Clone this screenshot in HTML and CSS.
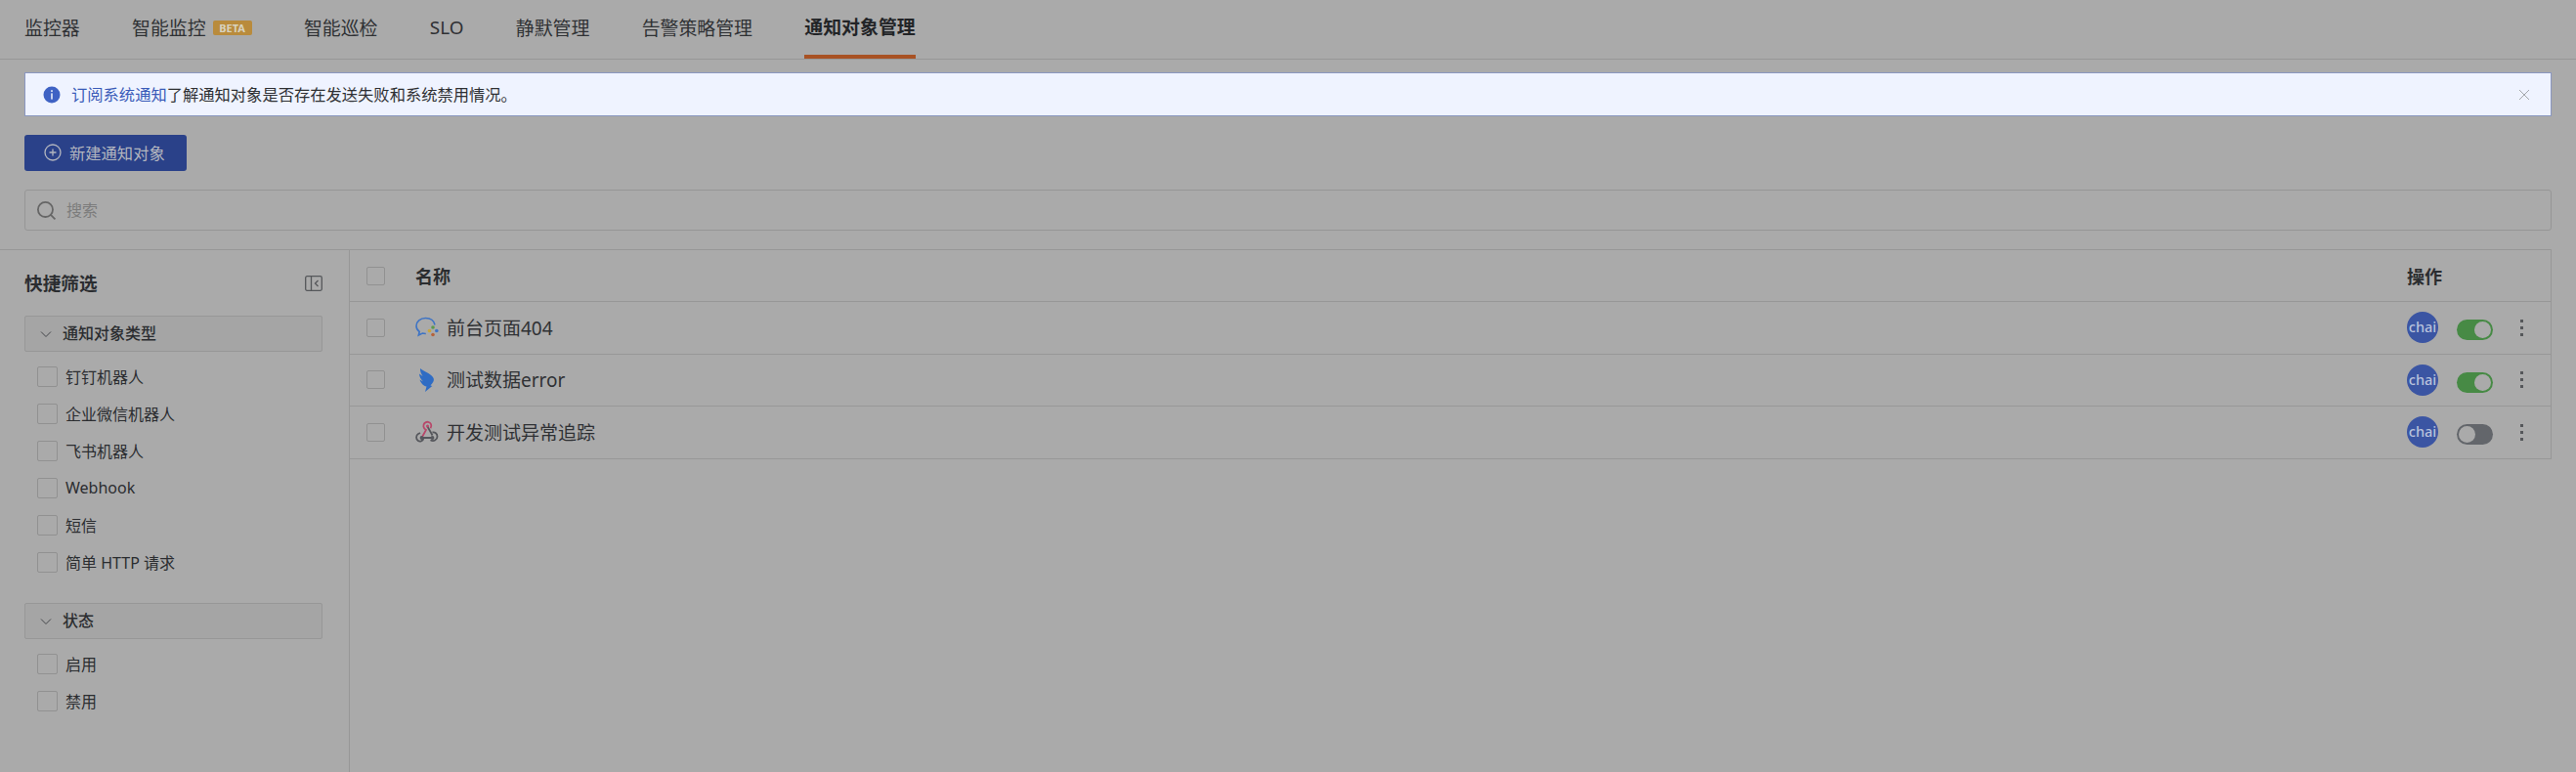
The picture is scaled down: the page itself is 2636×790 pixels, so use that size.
FILE: index.html
```html
<!DOCTYPE html>
<html lang="zh-CN">
<head>
    <meta charset="UTF-8">
    <title>通知对象管理</title>
    <link rel="stylesheet" href="styles.css">
</head>
<body>
    <nav class="tabs">
        <a class="tab">监控器</a>
        <a class="tab">智能监控<span class="beta">BETA</span></a>
        <a class="tab">智能巡检</a>
        <a class="tab">SLO</a>
        <a class="tab">静默管理</a>
        <a class="tab">告警策略管理</a>
        <a class="tab active">通知对象管理</a>
    </nav>

    <section class="top">
        <div class="banner">
            <svg class="info-icon" viewBox="0 0 18 18"><circle cx="9" cy="9" r="8.5" fill="#3f62c4"/><rect x="8.2" y="4.2" width="1.6" height="1.8" fill="#e6ebf8"/><rect x="8.2" y="7.4" width="1.6" height="6.2" fill="#e6ebf8"/></svg>
            <span class="banner-text"><a class="link">订阅系统通知</a>了解通知对象是否存在发送失败和系统禁用情况。</span>
            <svg class="close-icon" viewBox="0 0 12 12"><path d="M1 1l10 10M11 1L1 11" stroke="#a3a6ad" stroke-width="1" fill="none"/></svg>
        </div>
        <button class="btn-primary">
            <svg class="plus-icon" viewBox="0 0 18 18"><circle cx="9" cy="9" r="8" stroke="#b3b6bf" stroke-width="1.3" fill="none"/><path d="M9 5.5v7M5.5 9h7" stroke="#b3b6bf" stroke-width="1.3"/></svg>
            新建通知对象
        </button>
        <div class="search">
            <svg class="search-icon" viewBox="0 0 20 20"><circle cx="9" cy="9" r="7.2" stroke="#666" stroke-width="1.7" fill="none"/><path d="M14 14l4.5 4.5" stroke="#666" stroke-width="1.7"/></svg>
            <span>搜索</span>
        </div>
    </section>

    <div class="layout">
        <aside class="sidebar">
            <div class="sidebar-head">
                <h3>快捷筛选</h3>
                <svg class="collapse-icon" viewBox="0 0 18 16"><rect x="0.7" y="0.7" width="16.6" height="14.6" rx="1.5" stroke="#55575a" stroke-width="1.3" fill="none"/><path d="M6.5 1v14" stroke="#55575a" stroke-width="1.3"/><path d="M13.5 5l-3 3 3 3" stroke="#55575a" stroke-width="1.3" fill="none"/></svg>
            </div>

            <div class="group">
                <div class="group-head">
                    <svg class="chevron" viewBox="0 0 12 8"><path d="M1 1.5l5 5 5-5" stroke="#44464a" stroke-width="1" fill="none"/></svg>
                    <span class="group-title">通知对象类型</span>
                </div>
                <label class="option"><span class="check"></span>钉钉机器人</label>
                <label class="option"><span class="check"></span>企业微信机器人</label>
                <label class="option"><span class="check"></span>飞书机器人</label>
                <label class="option"><span class="check"></span>Webhook</label>
                <label class="option"><span class="check"></span>短信</label>
                <label class="option"><span class="check"></span>简单 HTTP 请求</label>
            </div>

            <div class="group">
                <div class="group-head">
                    <svg class="chevron" viewBox="0 0 12 8"><path d="M1 1.5l5 5 5-5" stroke="#44464a" stroke-width="1" fill="none"/></svg>
                    <span class="group-title">状态</span>
                </div>
                <label class="option"><span class="check"></span>启用</label>
                <label class="option"><span class="check"></span>禁用</label>
            </div>
        </aside>

        <main class="table">
            <div class="row head">
                <span class="check small"></span>
                <span class="name-col">名称</span>
                <span class="ops-col">操作</span>
            </div>

            <div class="row">
                <span class="check small"></span>
                <span class="name-col">
                    <svg class="type-icon" viewBox="0 0 24 24"><path d="M20 9.500C19 5 15.500 2.500 10.500 2.500 5 2.500 1 6 1 10.500c0 2.500 1.200 4.500 3.200 6l-.9 3.500 4-1.900c1 .3 2 .4 3.500.4" stroke="#3f74c4" stroke-width="1.600" fill="none"/><circle cx="21.800" cy="15.500" r="1.800" fill="#3f74c4"/><circle cx="18" cy="12" r="1.800" fill="#5d9a4c"/><circle cx="14.500" cy="15.500" r="1.800" fill="#c9a63a"/><circle cx="18" cy="19.500" r="1.800" fill="#b5633a"/></svg>
                    <span>前台页面404</span>
                </span>
                <span class="ops-col">
                    <span class="avatar">chai</span>
                    <span class="toggle on"></span>
                    <span class="more"><i></i><i></i><i></i></span>
                </span>
            </div>

            <div class="row">
                <span class="check small"></span>
                <span class="name-col">
                    <svg class="type-icon" viewBox="0 0 24 24"><path d="M5 0c3 2.500 10 5 13 9 1.500 2.200 1 4-.5 6l-2 2.500 1.800.5L10 24l1.500-5.500C8.500 18 5.500 15 4.500 11.500l3.500 2C5.500 11 4.200 8.500 4 5.500l3.500 2.500C6 5.500 4.800 3 5 0z" fill="#2f6cc4"/></svg>
                    <span>测试数据error</span>
                </span>
                <span class="ops-col">
                    <span class="avatar">chai</span>
                    <span class="toggle on"></span>
                    <span class="more"><i></i><i></i><i></i></span>
                </span>
            </div>

            <div class="row">
                <span class="check small"></span>
                <span class="name-col">
                    <svg class="type-icon" viewBox="0 0 24 24"><path d="M6.500 18L11 10C8 8.500 7.500 5 9.500 3c2-2 5.500-1.500 6.500 1 .6 1.500.4 3-.5 4.200" stroke="#b8486a" stroke-width="1.800" fill="none"/><path d="M12.500 6.500l5 9" stroke="#55575c" stroke-width="1.800" fill="none"/><path d="M17.500 12.500c2.500-.5 5 1 5 4.200 0 3.500-4 5.500-7 3.500" stroke="#55575c" stroke-width="1.800" fill="none"/><path d="M17.500 18h-9c-.5 3-3.500 4.500-5.700 3C.5 19.500.5 15.500 3 14l2-1" stroke="#55575c" stroke-width="1.800" fill="none"/><circle cx="6.500" cy="18" r="1.900" fill="#55575c"/><circle cx="17.500" cy="18" r="1.900" fill="#55575c"/><circle cx="12.500" cy="6" r="1.500" fill="#b8486a"/></svg>
                    <span>开发测试异常追踪</span>
                </span>
                <span class="ops-col">
                    <span class="avatar">chai</span>
                    <span class="toggle"></span>
                    <span class="more"><i></i><i></i><i></i></span>
                </span>
            </div>
        </main>
    </div>
</body>
</html>
```

FILE: styles.css
```css
* {
    margin: 0;
    padding: 0;
    box-sizing: border-box;
}

body {
    font-family: "Noto Sans", "Noto Sans CJK SC", sans-serif;
    background: #aaaaaa;
    color: #2b2d30;
    width: 2636px;
    height: 790px;
    overflow: hidden;
}

.tabs {
    display: flex;
    gap: 53.33px;
    height: 61px;
    padding-left: 25px;
    border-bottom: 1px solid #979797;
}

.tab {
    display: flex;
    align-items: center;
    height: 60px;
    padding-bottom: 4px;
    font-size: 18.9px;
    color: #2f3134;
}

.tab.active {
    font-weight: 700;
    color: #222427;
    border-bottom: 4px solid #a85224;
    padding-bottom: 0;
    height: 60px;
    align-items: flex-start;
    line-height: 56px;
}

.beta {
    margin-left: 7px;
    width: 40px;
    height: 15px;
    border-radius: 2px;
    background: #b98b3c;
    color: #d8d2bf;
    font-size: 11px;
    font-weight: 700;
    line-height: 15px;
    text-align: center;
}

.top {
    width: 2611px;
    padding: 13px 0 0 25px;
}

.banner {
    display: flex;
    align-items: center;
    height: 45px;
    padding: 0 21px 0 18px;
    background: #eff3ff;
    border: 1px solid #8a97c0;
    font-size: 16.3px;
    color: #2e3033;
}

.info-icon {
    width: 18px;
    height: 18px;
    margin-right: 11px;
}

.banner-text {
    flex: 1;
    margin-top: -2px;
}

.link {
    color: #3a5bb8;
}

.close-icon {
    width: 12px;
    height: 12px;
}

.btn-primary {
    display: flex;
    align-items: center;
    gap: 8px;
    width: 166px;
    height: 37px;
    margin-top: 19px;
    padding: 0 0 1px 20px;
    background: #2a4189;
    border: none;
    border-radius: 3px;
    color: #b3b6bf;
    font-family: inherit;
    font-size: 16.3px;
}

.plus-icon {
    width: 18px;
    height: 18px;
}

.search {
    display: flex;
    align-items: center;
    gap: 10px;
    height: 42px;
    margin-top: 19px;
    padding-left: 11px;
    border: 1px solid #969696;
    border-radius: 3px;
    font-size: 16px;
    color: #7c7c7c;
}

.search span {
    margin-top: -2px;
}

.search-icon {
    width: 21px;
    height: 21px;
}

.layout {
    display: flex;
    width: 2611px;
    height: 535px;
    margin-top: 19px;
    border-top: 1px solid #979797;
}

.sidebar {
    width: 358px;
    padding: 0 27px 0 25px;
    border-right: 1px solid #979797;
}

.sidebar-head {
    display: flex;
    justify-content: space-between;
    align-items: center;
    height: 67px;
}

.sidebar-head h3 {
    font-size: 18.67px;
    font-weight: 700;
    color: #2b2d30;
    margin-top: -3px;
}

.collapse-icon {
    width: 18px;
    height: 16px;
}

.group {
    margin-bottom: 23px;
}

.group-head {
    display: flex;
    align-items: center;
    height: 37px;
    padding-left: 15px;
    gap: 11px;
    background: #a5a5a5;
    border: 1px solid #979797;
    border-radius: 2px;
    font-size: 16px;
    font-weight: 500;
    margin-bottom: 6px;
}

.group-title {
    margin-top: -3px;
}

.chevron {
    width: 12px;
    height: 8px;
}

.option {
    display: flex;
    align-items: center;
    gap: 8px;
    height: 38px;
    padding: 0 0 0 13px;
    font-size: 16px;
    color: #2b2d30;
}

.check {
    display: block;
    width: 21px;
    height: 21px;
    flex-shrink: 0;
    border: 1px solid #919191;
    border-radius: 2px;
}

.check.small {
    width: 19px;
    height: 19px;
}

.table {
    flex: 1;
    align-self: flex-start;
    border-right: 1px solid #979797;
}

.row {
    display: flex;
    align-items: center;
    height: 53.5px;
    padding-left: 17px;
    border-bottom: 1px solid #979797;
    font-size: 19px;
    color: #2f3134;
}

.row.head {
    height: 53px;
    font-weight: 700;
    font-size: 18px;
    color: #2b2d30;
}

.name-col {
    display: flex;
    align-items: center;
    gap: 8px;
    flex: 1;
    margin-left: 31px;
}

.name-col span {
    margin-top: -1px;
}

.type-icon {
    width: 24px;
    height: 24px;
}

.ops-col {
    display: flex;
    align-items: center;
    width: 147px;
}

.avatar {
    width: 32px;
    height: 32px;
    border-radius: 50%;
    background: #3b55a3;
    color: #b9c2dc;
    font-size: 14.5px;
    font-weight: 500;
    line-height: 31px;
    text-align: center;
}

.toggle {
    display: flex;
    align-items: center;
    width: 37px;
    height: 21px;
    margin: 5px 0 0 19px;
    padding: 0 2px;
    border-radius: 11px;
    background: #63666b;
}

.toggle::before {
    content: "";
    width: 17px;
    height: 17px;
    border-radius: 50%;
    background: #aaaaaa;
}

.toggle.on {
    justify-content: flex-end;
    background: #478a45;
}

.more {
    display: flex;
    flex-direction: column;
    gap: 4px;
    margin-left: 28px;
}

.more i {
    width: 3px;
    height: 3px;
    background: #55575a;
}
```
